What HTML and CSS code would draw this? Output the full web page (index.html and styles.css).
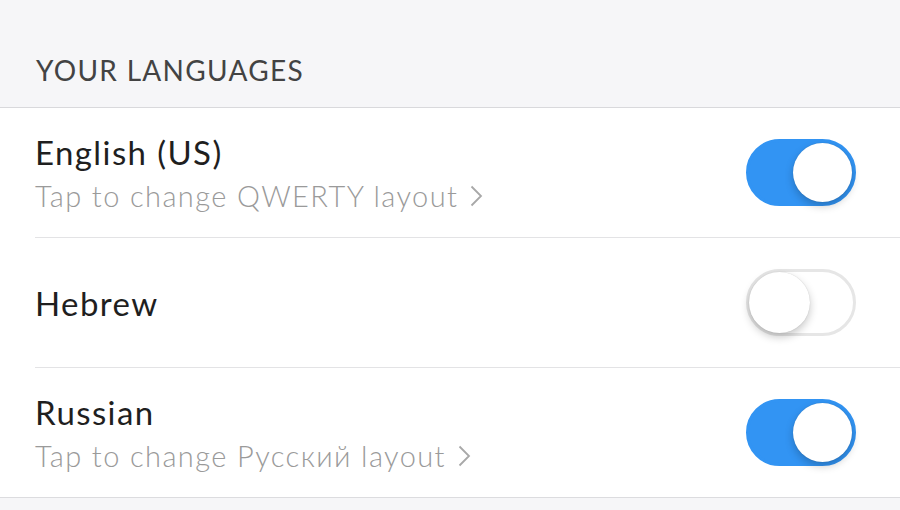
FILE: index.html
```html
<!DOCTYPE html>
<html lang="en">
<head>
    <meta charset="UTF-8">
    <meta name="viewport" content="width=device-width, initial-scale=1.0">
    <title>Your Languages</title>
    <link rel="stylesheet" href="styles.css">
</head>
<body>

<div class="section-header">YOUR LANGUAGES</div>

<div class="list">
    <div class="row">
        <div class="text">
            <div class="title">English (US)</div>
            <div class="subtitle">Tap to change QWERTY layout
                <svg class="chevron" width="13" height="22" viewBox="0 0 13 22"><path d="M1.5 1.5 L11 11 L1.5 20.5" fill="none" stroke="#a8a8a8" stroke-width="1.8"/></svg>
            </div>
        </div>
        <div class="toggle on"><div class="knob"></div></div>
    </div>
    <div class="row">
        <div class="text">
            <div class="title">Hebrew</div>
        </div>
        <div class="toggle"><div class="knob"></div></div>
    </div>
    <div class="row">
        <div class="text">
            <div class="title">Russian</div>
            <div class="subtitle">Tap to change Русский layout
                <svg class="chevron" width="13" height="22" viewBox="0 0 13 22"><path d="M1.5 1.5 L11 11 L1.5 20.5" fill="none" stroke="#a8a8a8" stroke-width="1.8"/></svg>
            </div>
        </div>
        <div class="toggle on"><div class="knob"></div></div>
    </div>
</div>

<div class="footer"></div>

</body>
</html>
```

FILE: styles.css
```css
body {
    margin: 0;
    background-color: #f6f6f8;
    font-family: Lato, "Noto Sans", sans-serif;
}
.section-header {
    height: 108px;
    box-sizing: border-box;
    padding: 53px 0 0 36px;
    font-size: 28px;
    color: #434343;
    letter-spacing: 1.3px;
    border-bottom: 1px solid #d9d9dc;
}
.list {
    background-color: #fff;
    border-bottom: 1px solid #dcdcdf;
}
.row {
    display: flex;
    align-items: center;
    height: 129px;
    margin-left: 35px;
    padding-right: 44px;
    border-bottom: 1px solid #e3e3e5;
}
.row:last-child {
    border-bottom: none;
}
.text {
    flex: 1;
}
.title {
    font-size: 33px;
    color: #1f1f1f;
    letter-spacing: 1.4px;
    line-height: 40px;
}
.subtitle {
    margin-top: 6px;
    font-size: 29px;
    font-weight: 300;
    color: #9a9a9a;
    letter-spacing: 1.4px;
    line-height: 36px;
    display: flex;
    align-items: center;
}
.chevron {
    margin-left: 12px;
}
.toggle {
    width: 110px;
    height: 67px;
    border-radius: 34px;
    box-sizing: border-box;
    border: 3px solid #e6e6e6;
    background-color: #fff;
    display: flex;
    align-items: center;
}
.toggle .knob {
    width: 61px;
    height: 61px;
    border-radius: 50%;
    background-color: #fff;
    box-shadow: 0 4px 8px rgba(0, 0, 0, 0.22), 0 0 1px rgba(0, 0, 0, 0.2);
}
.toggle.on {
    background-color: #3294f3;
    border-color: #3294f3;
    justify-content: flex-end;
}
.toggle.on .knob {
    width: 59px;
    height: 59px;
    margin-right: 1px;
}
.footer {
    height: 20px;
}
```
